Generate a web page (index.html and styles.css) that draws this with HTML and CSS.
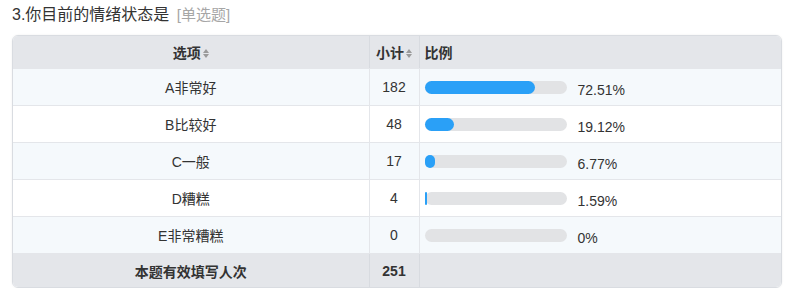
FILE: index.html
```html
<!DOCTYPE html>
<html lang="zh">
<head>
<meta charset="utf-8">
<link rel="stylesheet" href="styles.css">
</head>
<body>
<div class="page">
  <div class="title">3.你目前的情绪状态是 <span class="type">[单选题]</span></div>
  <div class="card">
    <table class="tbl">
      <colgroup><col class="c1"><col class="c2"><col class="c3"></colgroup>
      <thead>
        <tr>
          <th class="center">选项<span class="sort"><i class="up"></i><i class="down"></i></span></th>
          <th class="center">小计<span class="sort"><i class="up"></i><i class="down"></i></span></th>
          <th class="left">比例</th>
        </tr>
      </thead>
      <tbody>
        <tr class="alt"><td class="center">A非常好</td><td class="center">182</td><td><div class="ratio"><div class="track"><div class="fill" style="width:110px"></div></div><span class="pct">72.51%</span></div></td></tr>
        <tr><td class="center">B比较好</td><td class="center">48</td><td><div class="ratio"><div class="track"><div class="fill" style="width:29px"></div></div><span class="pct">19.12%</span></div></td></tr>
        <tr class="alt"><td class="center">C一般</td><td class="center">17</td><td><div class="ratio"><div class="track"><div class="fill" style="width:10px"></div></div><span class="pct">6.77%</span></div></td></tr>
        <tr><td class="center">D糟糕</td><td class="center">4</td><td><div class="ratio"><div class="track"><div class="fill" style="width:2px"></div></div><span class="pct">1.59%</span></div></td></tr>
        <tr class="alt"><td class="center">E非常糟糕</td><td class="center">0</td><td><div class="ratio"><div class="track"><div class="fill" style="width:0px"></div></div><span class="pct">0%</span></div></td></tr>
      </tbody>
      <tfoot>
        <tr><td class="center">本题有效填写人次</td><td class="center">251</td><td></td></tr>
      </tfoot>
    </table>
  </div>
</div>
</body>
</html>
```

FILE: styles.css
```css
html, body {
  margin: 0;
  padding: 0;
  background: #ffffff;
}
body {
  font-family: "Liberation Sans", Arial, "Noto Sans CJK SC", sans-serif;
  color: #333333;
  font-size: 14px;
}
.page {
  padding: 0 18px 0 12px;
}
.title {
  font-size: 16px;
  line-height: 20px;
  padding-top: 5px;
  height: 35px;
  box-sizing: border-box;
  color: #333333;
}
.type {
  color: #a6a6a6;
  font-size: 15px;
  margin-left: 3px;
}
.card {
  width: 770px;
  border: 1px solid #d9dce1;
  border-radius: 6px;
  overflow: hidden;
  box-shadow: 0 0 2px rgba(0, 0, 0, 0.08);
  box-sizing: border-box;
}
.tbl {
  width: 100%;
  border-collapse: collapse;
  table-layout: fixed;
}
.c1 { width: 356px; }
.c2 { width: 50px; }
.c3 { width: auto; }
.tbl th, .tbl td {
  padding: 0 5px;
  border-right: 1px solid #e4e6ea;
  border-bottom: 1px solid #e4e6ea;
  font-size: 14px;
}
.tbl th:last-child, .tbl td:last-child {
  border-right: none;
}
.tbl thead th {
  background: #e4e6ea;
  height: 32px;
  font-weight: bold;
  color: #333333;
  border-right-color: #d8dbe0;
}
.tbl tbody td {
  height: 36px;
  background: #ffffff;
}
.tbl tbody tr.alt td {
  background: #f5f9fc;
}
.tbl tfoot td {
  background: #e4e6ea;
  height: 33px;
  font-weight: bold;
  border-bottom: none;
  border-right-color: #d8dbe0;
}
.center { text-align: center; }
.left { text-align: left; }
.sort {
  display: inline-flex;
  flex-direction: column;
  gap: 1px;
  margin-left: 2px;
  vertical-align: middle;
  position: relative;
  top: -1px;
}
.sort i {
  display: block;
  width: 0;
  height: 0;
  border-left: 3px solid transparent;
  border-right: 3px solid transparent;
}
.sort .up { border-bottom: 4px solid #9a9a9a; }
.sort .down { border-top: 4px solid #9a9a9a; }
.ratio {
  display: flex;
  align-items: center;
}
.track {
  width: 142px;
  height: 13px;
  border-radius: 7px;
  background: #e2e3e5;
  flex: none;
}
.fill {
  height: 100%;
  background: #2aa0f7;
  border-radius: 7px;
}
.pct {
  margin-left: 11px;
  position: relative;
  top: 3px;
  color: #333333;
  font-size: 14px;
}
```
